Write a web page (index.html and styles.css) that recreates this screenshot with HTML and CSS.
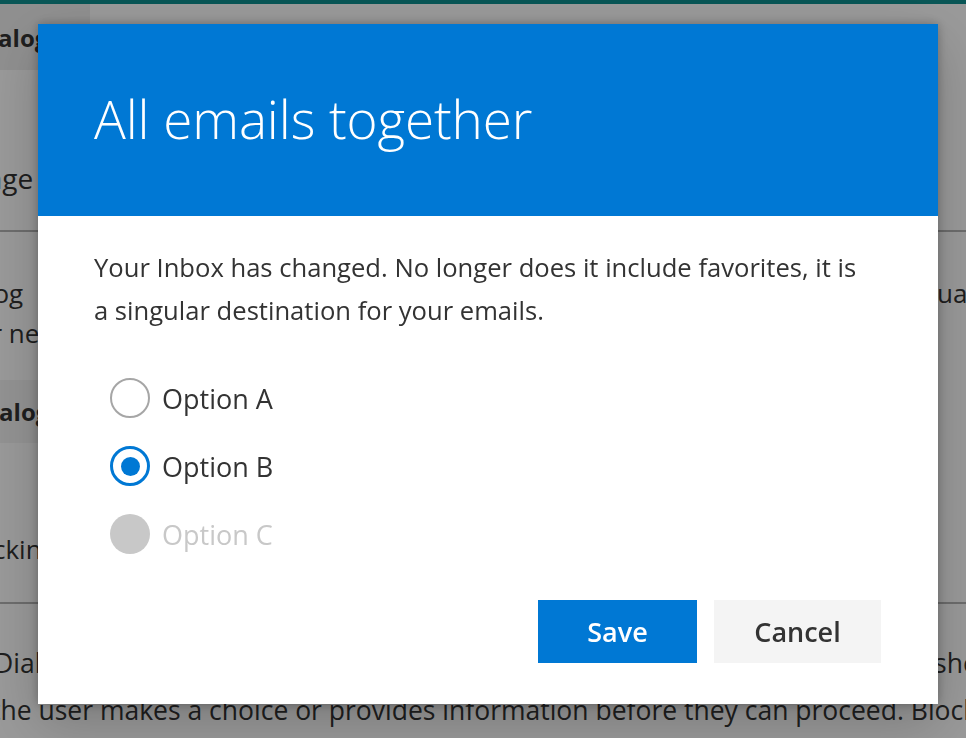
FILE: index.html
```html
<!DOCTYPE html>
<html lang="en">
<head>
<meta charset="utf-8">
<title>All emails together</title>
<link rel="stylesheet" href="styles.css">
</head>
<body>
<div class="page">
  <div class="topbar"></div>
  <div class="tabs">
    <div class="tab">Dialog</div>
  </div>
  <div class="section-head">
    <div class="heading">Usage</div>
  </div>
  <div class="rule"></div>
  <div class="para">
    <div class="row"><span class="lead-a">Use a dialog</span><span class="tail-a">contextual</span></div>
    <div class="row"><span class="lead-b">for your needs</span></div>
  </div>
  <div class="band"><span class="band-text">Dialog</span></div>
  <div class="blocking"><span class="blocking-text">Blocking</span></div>
  <div class="rule rule-2"></div>
  <div class="para-2">
    <div class="row"><span class="lead-c">Dialogs</span><span class="tail-c">should</span></div>
    <div class="row"><span class="lead-d">the user makes a choice or provides information before they can proceed. Blocking</span></div>
  </div>
</div>

<div class="overlay"></div>

<div class="dialog" role="dialog" aria-labelledby="dlg-title">
  <div class="dialog-header">
    <h1 id="dlg-title" class="dialog-title">All emails together</h1>
  </div>
  <div class="dialog-body">
    <p class="dialog-text">Your Inbox has changed. No longer does it include favorites, it is a singular destination for your emails.</p>
    <div class="choices">
      <label class="choice">
        <span class="radio"></span>
        <span class="choice-label">Option A</span>
      </label>
      <label class="choice">
        <span class="radio radio-checked"></span>
        <span class="choice-label">Option B</span>
      </label>
      <label class="choice choice-disabled">
        <span class="radio radio-disabled"></span>
        <span class="choice-label">Option C</span>
      </label>
    </div>
    <div class="actions">
      <button class="btn btn-primary">Save</button>
      <button class="btn btn-default">Cancel</button>
    </div>
  </div>
</div>
</body>
</html>
```

FILE: styles.css
```css
* { box-sizing: border-box; }

html, body {
  margin: 0;
  padding: 0;
  width: 966px;
  height: 738px;
  overflow: hidden;
  background: #ffffff;
  font-family: "Open Sans", "Noto Sans", "Liberation Sans", sans-serif;
  color: #333333;
}

/* ---------- background page ---------- */
.page {
  width: 966px;
  height: 738px;
  overflow: hidden;
  display: flex;
  flex-direction: column;
}

.topbar {
  height: 4px;
  background: #0f8f8f;
  flex: none;
}

.tabs {
  height: 66px;
  flex: none;
  display: flex;
  align-items: stretch;
}

.tab {
  width: 120px;
  margin-left: -30px;
  background: #efefef;
  font-weight: 700;
  font-size: 24px;
  display: flex;
  align-items: center;
  padding-left: 3px;
}

.section-head {
  height: 160px;
  flex: none;
  padding-top: 88px;
}

.heading {
  font-size: 28px;
  line-height: 40px;
  margin-left: -47px;
}

.rule {
  height: 2px;
  background: #b5b5b5;
  flex: none;
}

.para {
  flex: none;
  padding-top: 41px;
  font-size: 26px;
  line-height: 40px;
}

.row {
  display: flex;
  justify-content: space-between;
  white-space: nowrap;
}

.lead-a { margin-left: -124px; }
.tail-a { margin-right: -8px; }
.lead-b { margin-left: -95px; }

.band {
  flex: none;
  margin-top: 27px;
  height: 63px;
  width: 300px;
  background: #f4f4f4;
  display: flex;
  align-items: center;
  font-size: 24px;
  font-weight: 700;
}

.band-text { margin-left: -26px; }

.blocking {
  flex: none;
  margin-top: 86px;
  font-size: 26px;
  line-height: 40px;
}

.blocking-text { margin-left: -46px; }

.rule-2 { margin-top: 33px; }

.para-2 {
  flex: none;
  padding-top: 36px;
  font-size: 26.5px;
  line-height: 47px;
}

.lead-c { margin-left: -6px; }
.tail-c { margin-right: -52px; }
.lead-d { margin-left: -9px; }

/* ---------- overlay ---------- */
.overlay {
  position: fixed;
  inset: 0;
  background: rgba(0, 0, 0, 0.4);
}

/* ---------- dialog ---------- */
.dialog {
  position: fixed;
  left: 38px;
  top: 24px;
  width: 900px;
  height: 680px;
  background: #ffffff;
  box-shadow: 0 0 10px rgba(0, 0, 0, 0.28), 0 20px 50px rgba(0, 0, 0, 0.2);
  display: flex;
  flex-direction: column;
}

.dialog-header {
  height: 192px;
  flex: none;
  background: #0078d4;
  display: flex;
  align-items: center;
  padding-left: 56px;
  padding-bottom: 4px;
}

.dialog-title {
  margin: 0;
  color: #ffffff;
  font-weight: 300;
  font-size: 53px;
  line-height: 1;
  letter-spacing: -0.1px;
}

.dialog-body {
  padding: 30px 57px 41px 56px;
  display: flex;
  flex-direction: column;
  flex: 1;
}

.dialog-text {
  margin: 0;
  max-width: 780px;
  font-size: 25.6px;
  line-height: 43px;
  color: #333333;
}

.choices {
  margin-top: 46px;
  padding-left: 16px;
  display: flex;
  flex-direction: column;
  gap: 28px;
}

.choice {
  height: 40px;
  display: flex;
  align-items: center;
  gap: 12px;
  font-size: 27px;
  color: #333333;
}

.choice-disabled { color: #c8c8c8; }

.radio {
  width: 40px;
  height: 40px;
  border-radius: 50%;
  border: 2px solid #a6a6a6;
  background: #ffffff;
  flex: none;
  display: flex;
  align-items: center;
  justify-content: center;
}

.radio-checked {
  border: 3.5px solid #0078d4;
}

.radio-checked::after {
  content: "";
  width: 19px;
  height: 19px;
  border-radius: 50%;
  background: #0078d4;
}

.radio-disabled {
  border: none;
  background: #c8c8c8;
}

.actions {
  margin-top: auto;
  display: flex;
  justify-content: flex-end;
  gap: 17px;
}

.btn {
  height: 63px;
  border: none;
  font-family: "Open Sans", "Noto Sans", "Liberation Sans", sans-serif;
  font-size: 27px;
  font-weight: 600;
  padding: 0;
  cursor: pointer;
}

.btn-primary {
  width: 159px;
  background: #0078d4;
  color: #ffffff;
}

.btn-default {
  width: 167px;
  background: #f4f4f4;
  color: #333333;
}
```
